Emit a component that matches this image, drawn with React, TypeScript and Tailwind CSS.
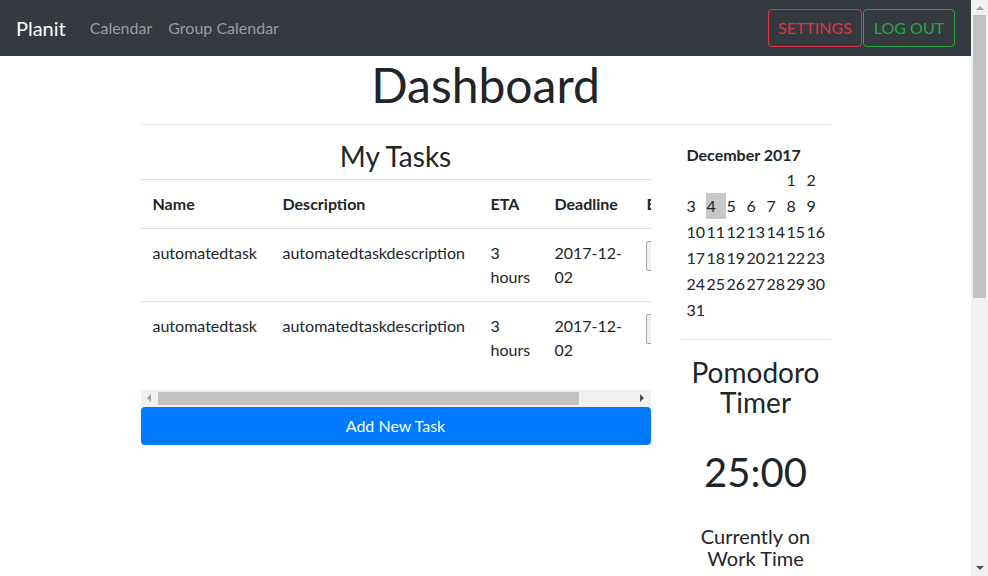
import React from "react";

const tasks = [
  { name: "automatedtask", description: "automatedtaskdescription", eta: "3 hours", deadline: "2017-12-02" },
  { name: "automatedtask", description: "automatedtaskdescription", eta: "3 hours", deadline: "2017-12-02" },
];

// December 2017 starts on a Friday
const days: (number | null)[] = [null, null, null, null, null, ...Array.from({ length: 31 }, (_, i) => i + 1)];

function Navbar() {
  return (
    <nav className="flex h-[56px] items-center bg-[#343a40] px-4">
      <span className="mr-4 text-[20px] text-white">Planit</span>
      <a className="px-2 text-[16px] text-[#9a9da0]">Calendar</a>
      <a className="px-2 text-[16px] text-[#9a9da0]">Group Calendar</a>
      <div className="ml-auto flex gap-px">
        <button className="h-[38px] w-[94px] rounded border border-[#dc3545] text-[16px] text-[#dc3545]">SETTINGS</button>
        <button className="h-[38px] w-[92px] rounded border border-[#28a745] text-[16px] text-[#28a745]">LOG OUT</button>
      </div>
    </nav>
  );
}

function TaskTable() {
  return (
    <div className="w-[510px] overflow-hidden">
      <table className="w-[576px] table-fixed border-t border-[#dee2e6] text-left">
        <colgroup>
          <col className="w-[130px]" />
          <col className="w-[208px]" />
          <col className="w-[64px]" />
          <col className="w-[92px]" />
          <col className="w-[82px]" />
        </colgroup>
        <thead>
          <tr className="border-b border-[#dee2e6]">
            <th className="p-3 align-bottom font-bold">Name</th>
            <th className="p-3 align-bottom font-bold">Description</th>
            <th className="p-3 align-bottom font-bold">ETA</th>
            <th className="p-3 align-bottom font-bold">Deadline</th>
            <th className="p-3 align-bottom font-bold">Edit</th>
          </tr>
        </thead>
        <tbody>
          {tasks.map((t, i) => (
            <tr key={i} className="border-t border-[#dee2e6]">
              <td className="p-3 align-top">{t.name}</td>
              <td className="p-3 align-top">{t.description}</td>
              <td className="p-3 align-top">{t.eta}</td>
              <td className="break-all p-3 align-top">{t.deadline}</td>
              <td className="py-3 pl-[11px] align-top">
                <button className="h-[30px] rounded-[2px] border border-[#a9a9a9] bg-[#efefef] px-2 text-[13px]">Edit</button>
              </td>
            </tr>
          ))}
        </tbody>
      </table>
    </div>
  );
}

function HScrollbar() {
  return (
    <div className="mt-4 flex h-[17px] w-[510px] items-center bg-[#f1f1f1]">
      <div className="flex w-[17px] justify-center">
        <div className="h-0 w-0 border-y-[4px] border-r-[4px] border-y-transparent border-r-[#a3a3a3]" />
      </div>
      <div className="h-[13px] w-[421px] bg-[#c1c1c1]" />
      <div className="flex-1" />
      <div className="flex w-[17px] justify-center">
        <div className="h-0 w-0 border-y-[4px] border-l-[4px] border-y-transparent border-l-[#505050]" />
      </div>
    </div>
  );
}

function Calendar() {
  return (
    <div className="pt-[18px]">
      <div className="ml-[6px] h-[24px] font-bold leading-[24px]">December 2017</div>
      <div className="ml-[5px] grid w-[140px] grid-cols-7">
        {days.map((d, i) => (
          <div key={i} className={`h-[26px] pl-px leading-[26px] ${d === 4 ? "bg-[#c8c8c8]" : ""}`}>
            {d ?? ""}
          </div>
        ))}
      </div>
    </div>
  );
}

function VScrollbar() {
  return (
    <div className="flex h-[576px] w-[17px] flex-col items-center bg-[#f1f1f1]">
      <div className="flex h-[15px] items-center">
        <div className="h-0 w-0 border-x-[4px] border-b-[4px] border-x-transparent border-b-[#a3a3a3]" />
      </div>
      <div className="h-[283px] w-[13px] bg-[#c1c1c1]" />
      <div className="flex-1" />
      <div className="flex h-[17px] items-center">
        <div className="h-0 w-0 border-x-[4px] border-t-[4px] border-x-transparent border-t-[#505050]" />
      </div>
    </div>
  );
}

export default function App() {
  return (
    <div className="flex h-[576px] w-[988px] overflow-hidden bg-white font-['Lato',sans-serif] text-[16px] leading-[24px] text-[#212529]">
      <div className="flex w-[971px] flex-col">
        <Navbar />
        <div className="mx-auto w-[690px]">
          <h1 className="mb-[10px] text-center text-[48px] leading-[1.2]">Dashboard</h1>
          <hr className="border-t border-[#e6e6e6]" />
          <div className="flex gap-[30px]">
            <div className="w-[510px]">
              <h2 className="mb-[6px] mt-[14px] h-[34px] text-center text-[28px] leading-[34px]">My Tasks</h2>
              <TaskTable />
              <HScrollbar />
              <button className="h-[38px] w-full rounded bg-[#007bff] text-[16px] text-white">Add New Task</button>
            </div>
            <div className="w-[150px]">
              <Calendar />
              <hr className="mt-[16px] border-t border-[#e6e6e6]" />
              <h3 className="mt-[17px] text-center text-[28px] leading-[30px]">
                Pomodoro
                <br />
                Timer
              </h3>
              <div className="mt-[31px] text-center text-[40px] leading-[48px]">25:00</div>
              <div className="mt-[29px] text-center text-[20px] leading-[22px]">
                Currently on
                <br />
                Work Time
              </div>
            </div>
          </div>
        </div>
      </div>
      <VScrollbar />
    </div>
  );
}
